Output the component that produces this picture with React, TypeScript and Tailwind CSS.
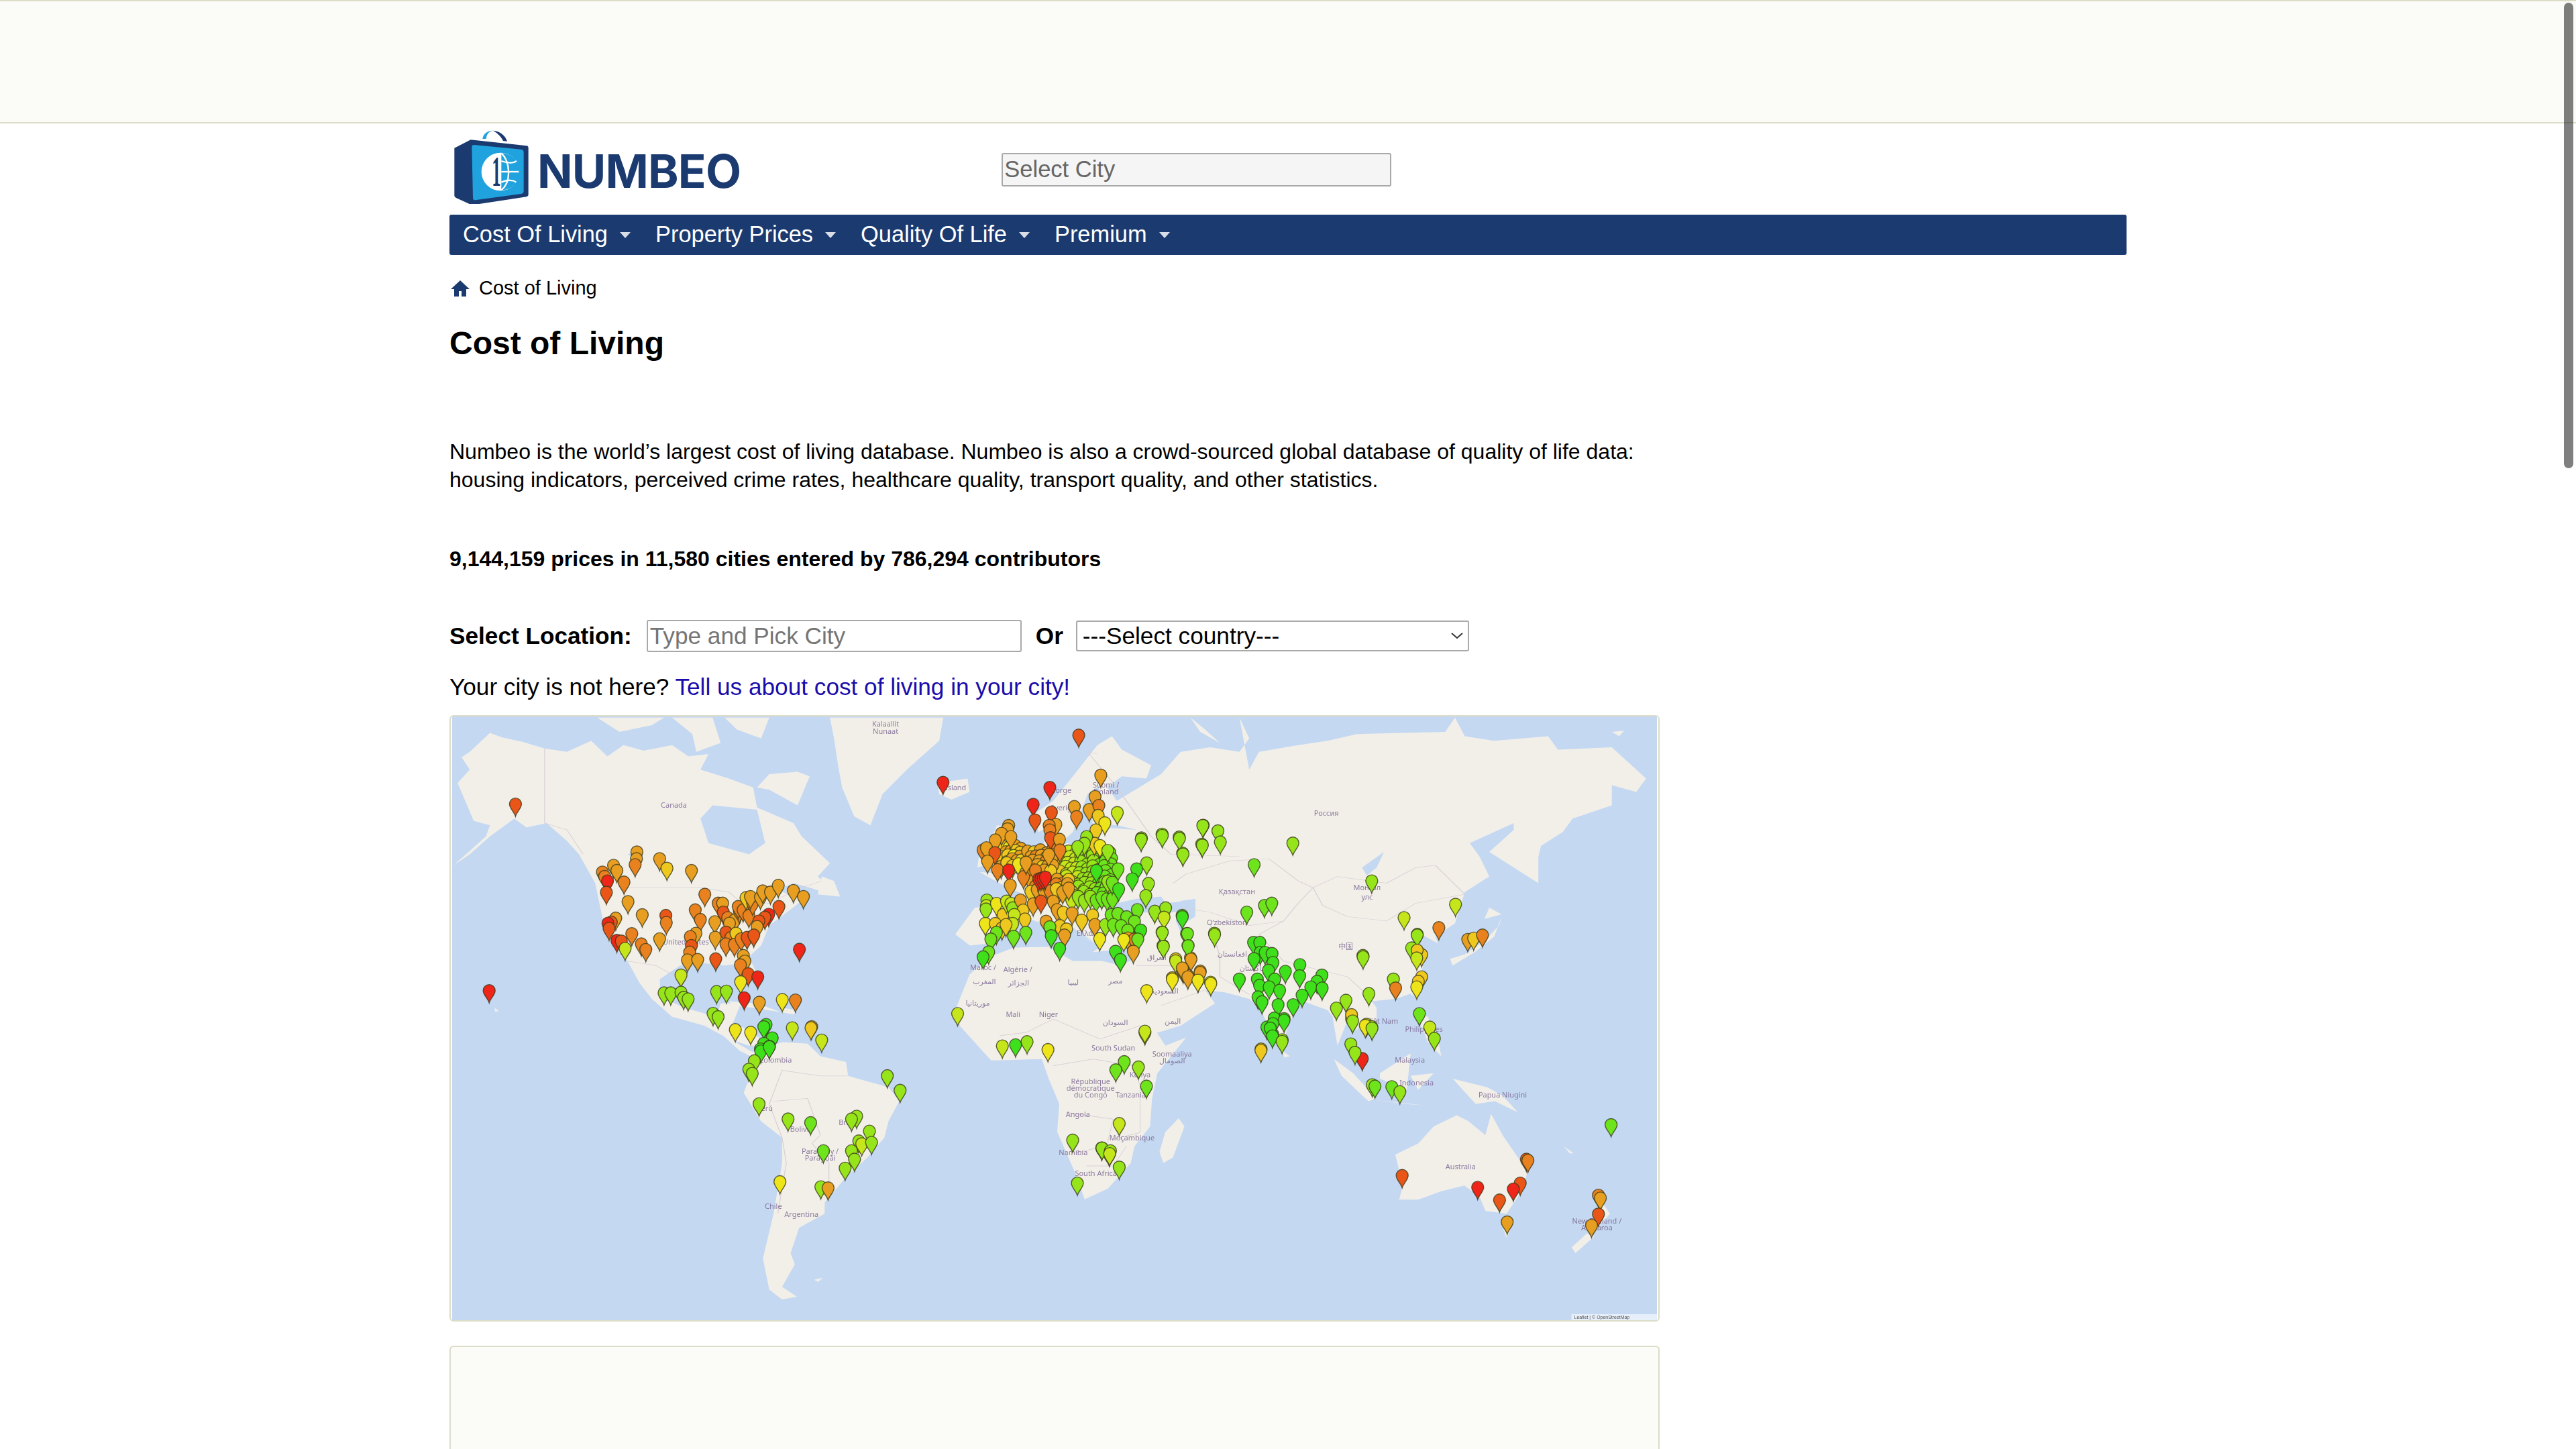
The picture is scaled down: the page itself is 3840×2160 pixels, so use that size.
const COLORS: Record<string, string> = {
  R: '#ee2518',
  r: '#ea5518',
  o: '#e8811e',
  a: '#e89e20',
  y: '#eec81e',
  Y: '#eee41a',
  l: '#c4e61a',
  L: '#96e41a',
  g: '#6de41c',
  G: '#3ee01c',
};

interface Pin {
  x: number;
  y: number;
  c: string;
}

// pins are written as "<colour><x>,<y>", tip position in a zoomed frame of the map
const parsePins = (s: string, ox: number, oy: number, sx: number, sy: number): Pin[] =>
  s
    .trim()
    .split(/\s+/)
    .map((p) => {
      const [x, y] = p.slice(1).split(',').map(Number);
      return { x: ox + x * sx, y: oy + y * sy, c: p[0] };
    });

// small fixed wobble so the dense clusters don't read as a grid
const wobble = (i: number, j: number) => Math.sin(i * 12.9 + j * 78.2) * 9;

const eastEurope = (): Pin[] => {
  const out: Pin[] = [];
  for (let j = 0; j < 10; j++) {
    for (let i = 0; i < 10; i++) {
      const x = 400 + i * 27 + (j % 2) * 13 + wobble(i, j);
      const y = 296 + j * 23 + wobble(j, i);
      if (x > 660 || (j > 7 && x < 450)) continue;
      const c = x < 440 ? 'y' : x < 500 ? 'l' : x < 580 ? 'L' : 'g';
      out.push({ x: 1440 + x / 3, y: 1190 + y / 3, c });
    }
  }
  return out;
};

const westEurope = (): Pin[] => {
  const out: Pin[] = [];
  const warm = ['y', 'a', 'y', 'Y', 'a'];
  for (let j = 0; j < 5; j++) {
    for (let i = 0; i < 4; i++) {
      out.push({
        x: 1440 + (165 + i * 24 + (j % 2) * 10 + wobble(i, j)) / 3,
        y: 1190 + (271 + j * 20 + wobble(j, i)) / 3,
        c: warm[(i * 3 + j) % 5],
      });
    }
  }
  const german = ['a', 'a', 'y', 'o', 'a'];
  for (let j = 0; j < 5; j++) {
    for (let i = 0; i < 5; i++) {
      out.push({
        x: 1440 + (275 + i * 26 + (j % 2) * 12 + wobble(i, j)) / 3,
        y: 1190 + (291 + j * 22 + wobble(j, i)) / 3,
        c: german[(i * 2 + j) % 5],
      });
    }
  }
  const alps = ['a', 'o', 'y', 'a'];
  for (let j = 0; j < 3; j++) {
    for (let i = 0; i < 7; i++) {
      out.push({
        x: 1440 + (295 + i * 26 + (j % 2) * 12 + wobble(i, j)) / 3,
        y: 1190 + (426 + j * 20 + wobble(j, i)) / 3,
        c: alps[(i + j) % 4],
      });
    }
  }
  return out;
};

const pins: Pin[] = [
  ...parsePins('r173,470 R108,1308', 660, 1060, 0.606, 1 / 3),
  ...parsePins(
    `a260,115 a258,145 o252,172 a362,145 y395,188 a505,198 o105,205 o115,225 a155,175 a170,198 R128,245 r123,296 o202,250
     a220,338 a284,397 r390,400 o392,432 a165,412 r145,430 R130,435 r135,458 o237,482 R170,512 r190,515 l207,548 o280,528 o300,553 a362,505
     o565,305 o522,375 o545,418 a525,480 o500,495 r505,535 o497,565 a487,600 a533,598 r614,595 a610,428 a612,498 o625,345 a645,345 r648,385
     o668,410 a700,420 a676,435 o720,380 o715,360 o737,375 o763,400 y750,320 o780,345 a770,315 a815,318 a825,290 a860,295 a895,265 a963,288 a1008,315
     r898,360 R852,395 r835,408 r808,425 a800,450 r660,475 o682,500 y705,480 o660,528 o698,530 o728,505 r755,498 r785,488 R990,552
     a738,580 a745,605 o725,622 r760,662 R803,676 Y726,698 R742,770 a810,790 Y913,778 o972,780
     l458,668 L382,748 L412,748 L458,745 L470,768 L490,775 L618,742 L662,740 L602,840 L625,855 Y702,913 Y771,925
     G840,890 G830,900 G868,950 G830,975 G855,988 G815,1000 l958,905 a1045,900 y1042,905 l1090,960`,
    860, 1250, 1 / 3, 1 / 3,
  ),
  ...parsePins(
    `G740,205 G760,190 L725,240 L712,270 L720,285 L1037,293 L1067,345 L736,393 L804,447 g857,460 L965,437 L953,447 L995,490
     L970,525 l977,535 L1000,530 L953,560 L960,590 g887,560 L938,622 Y785,670 L881,688 a898,692
     l1202,72 l1307,187 G1338,183 L1365,172 Y1414,200 L1472,522 L1540,550 L1558,572 L1483,675`,
    660, 1500, 0.638, 0.421,
  ),
  ...parsePins(
    `l187,140 g133,243 g111,272 L170,262 g191,330 l120,463 L75,550 L97,560 l95,570 L120,618 y490,198 L545,165 G520,145 G505,120 G525,95 G550,90
     g903,72 l930,120 L942,160 R754,232 L724,180 L735,210 L780,325 g787,330 g831,332 L852,350 l726,90 l765,110 L778,118
     r858,648 R1055,690 r1112,735 r1166,675 R1148,696 r1182,590 o1186,594 a1132,813 g1403,467 o1370,718 a1375,728 r1370,785 a1352,825`,
    1600, 1500, 0.574, 0.421,
  ),
  ...parsePins(
    `r352,160 a397,340 R75,372 R293,395 L606,565 L636,590 L480,622 L522,605 L557,618 L641,640 L603,650 L564,690 L789,645 g710,742
     L950,815 l1121,920 l1016,980 g1043,1055 o1087,1025 a1146,1078 y1158,1072 o1176,1058 L932,1150 g695,955 g731,925 g746,915 L629,1050 g572,1052 g575,1105 g563,970 L522,1045 L524,1105
     y550,1165 a580,1160 y543,1250 a565,1220 a575,1240 a600,1220 Y596,1258 l621,1270 l487,1490`,
    1350, 1060, 0.7336, 1 / 3,
  ),
  ...eastEurope(),
  ...westEurope(),
  ...parsePins(
    `R300,75 r308,145 r382,110 a402,165 o372,170 o375,190 r378,225 a418,232 a485,85 o495,130 a552,98 a578,40 o595,80 y592,125 Y622,158 l678,112
     y582,190 y575,250 L540,220 L530,250 Y600,260 L500,265 L635,282 L785,232 L880,215 L957,228 L1062,170 L1060,258 L973,298 L810,338 g681,365 G765,365 G745,410 L818,430 L806,485 G584,372
     a190,170 a185,185 a158,205 a130,235 a200,220 o75,280 a90,270 r128,292 a95,330 o140,368 R190,370 a197,438 o257,400 o310,370 a268,335 o420,280 a370,300
     R325,410 R335,408 R345,405 R355,402 L92,505 l90,530 L88,545 Y85,610 Y135,520 y165,570 l180,510 l200,520 L208,540 a243,505 y255,550 y263,590 l215,570 l208,610
     y130,610 y160,630 y178,615 g212,668 g267,650 g135,650 g110,680 g100,738 G75,760 a300,522 r335,510 a390,510 a408,548 y435,560 a475,563 y518,595 y567,572 a577,615 Y599,678
     a358,600 y420,620 y450,635 a441,662 g375,625 G381,665 G419,722 L635,420 g655,425 G684,455 L625,615 g650,570 g680,565 g720,580 g768,548 g660,615 g695,620 g755,600 g725,640 G783,640
     a725,675 o755,680 g770,680 Y707,682 a750,735 G670,735 G692,772 L846,555 L895,540 l888,582 G970,580 L880,650 g993,655 L885,713 g996,710 l940,778 a1009,770 a970,810 a995,850 Y925,860 a1050,830 Y1040,865 Y810,912`,
    1440, 1192, 1 / 3, 1 / 3,
  ),
  ...parsePins(
    `L35,90 G210,125 G238,125 G240,170 G262,170 G212,198 G293,175 G297,215 G277,250 G353,255 G418,225 G417,275 G146,290 Y18,310 G227,290 G237,318 G305,290 G280,325 G327,340
     G517,272 G495,300 G467,325 G518,330 G428,362 G388,405 G320,405 G230,370 G248,392 G303,465 G347,475 G297,490 G285,510 G295,545 L338,570 y243,610
     L702,190 L945,92 L920,150 y965,180 y945,160 l943,195 L728,355 L625,385 L582,420 y650,450 L655,478 Y712,498 L742,510 L838,290 o848,330 y965,280 y950,300 Y943,325`,
    1800, 1382, 1 / 3, 1 / 3,
  ),
];

const labels: [number, number, string][] = [
  [1002, 1204, 'Canada'],
  [1020, 1409, 'United States'],
  [1319, 1082, 'Kalaallit'],
  [1319, 1093, 'Nunaat'],
  [1424, 1177, 'Ísland'],
  [1581, 1182, 'Norge'],
  [1585, 1208, 'Sverige'],
  [1649, 1173, 'Suomi /'],
  [1649, 1184, 'Finland'],
  [1979, 1216, 'Россия'],
  [1845, 1333, 'Қазақстан'],
  [2040, 1327, 'Монгол'],
  [2040, 1341, 'улс'],
  [2008, 1416, '中国'],
  [1830, 1379, 'Oʻzbekiston'],
  [1620, 1395, 'Ελλάς'],
  [1838, 1427, 'افغانستان'],
  [1867, 1448, 'پاکستان'],
  [1725, 1432, 'العراق'],
  [1465, 1447, 'Maroc /'],
  [1467, 1468, 'المغرب'],
  [1517, 1450, 'Algérie /'],
  [1518, 1470, 'الجزائر'],
  [1600, 1469, 'ليبيا'],
  [1663, 1467, 'مصر'],
  [1737, 1482, 'السعودية'],
  [1457, 1500, 'موريتانيا'],
  [1510, 1517, 'Mali'],
  [1563, 1517, 'Niger'],
  [1663, 1529, 'السودان'],
  [1749, 1527, 'اليمن'],
  [1660, 1567, 'South Sudan'],
  [1748, 1576, 'Soomaaliya'],
  [1748, 1586, 'الصومال'],
  [1700, 1607, 'Kenya'],
  [1686, 1638, 'Tanzania'],
  [1626, 1617, 'République'],
  [1626, 1627, 'démocratique'],
  [1626, 1638, 'du Congo'],
  [1607, 1667, 'Angola'],
  [1600, 1724, 'Namibia'],
  [1634, 1755, 'South Africa'],
  [1688, 1702, 'Moçambique'],
  [1154, 1585, 'Colombia'],
  [1138, 1658, 'Perú'],
  [1193, 1689, 'Bolivia'],
  [1263, 1679, 'Brasil'],
  [1221, 1722, 'Paraguay /'],
  [1221, 1732, 'Paraguái'],
  [1151, 1804, 'Chile'],
  [1193, 1816, 'Argentina'],
  [2104, 1585, 'Malaysia'],
  [2114, 1619, 'Indonesia'],
  [2243, 1638, 'Papua Niugini'],
  [2180, 1745, 'Australia'],
  [2384, 1826, 'New Zealand /'],
  [2384, 1836, 'Aotearoa'],
  [2125, 1539, 'Philippines'],
  [2063, 1527, 'Việt Nam'],
];

function WorldMap() {
  const land = '#f2efe9';
  const water = '#c4d8f2';
  const line = '#d9cfd6';
  return (
    <svg viewBox="670 1067 1804 904" className="block w-full h-full blur-[0.6px]">
      <rect x="670" y="1067" width="1804" height="904" fill={water} />

      {/* americas, traced from the top-left part of the map */}
      <g transform="translate(660 1060) scale(0.606 0.3333)" fill={land}>
        <polygon points="40,205 60,180 110,95 140,115 190,135 245,165 300,180 360,130 400,200 440,150 490,175 560,150 600,200 650,190 630,260 700,300 760,340 770,430 860,500 880,560 950,680 920,740 970,830 900,790 860,770 820,800 900,860 880,850 830,920 800,960 780,1050 750,1100 770,1180 760,1200 735,1130 690,1140 640,1130 580,1140 530,1200 530,1280 590,1330 630,1350 670,1370 680,1310 730,1310 710,1400 750,1430 800,1500 750,1500 700,1470 640,1410 560,1370 510,1290 480,1220 450,1120 400,1020 385,900 370,770 330,640 300,580 250,500 200,520 170,480 110,560 60,640 20,690 100,560 110,510 70,490 30,320 60,260" />
        <polygon points="375,26 430,90 510,60 540,26" />
        <polygon points="560,26 610,100 620,180 680,140 660,26" />
        <polygon points="690,26 800,26 780,120 720,80" />
        <polygon points="770,340 800,280 870,270 900,290 870,420 800,350" />
        <polygon points="950,26 1230,26 1220,130 1140,260 1080,370 1050,510 1010,470 980,340 970,240 960,120" />
        <polygon points="1215,320 1290,300 1295,360 1250,395 1220,370" />
        <polygon points="700,1300 770,1310 830,1350 760,1330 710,1320" />
        <polygon points="830,1330 870,1340 860,1360 830,1350" />
        <polygon points="930,740 960,760 975,830 920,820" />
        <polygon points="122,1330 132,1345 122,1347" />
        <polygon fill={water} points="630,480 660,420 770,440 790,590 750,640 650,590" />
        <polygon fill={water} points="450,640 480,620 470,660" />
        <g fill="none" stroke={line} strokeWidth="2">
          <polyline points="455,790 630,790 700,810 740,870 800,860 880,790 930,760" />
          <polyline points="245,165 245,500 300,530 340,640" />
          <polyline points="450,1120 520,1140 560,1180 590,1170" />
        </g>
      </g>
      <g transform="translate(660 1500) scale(0.638 0.421)" fill={land}>
        <polygon points="720,165 790,130 850,135 880,180 940,200 945,250 1040,290 1065,340 1040,410 1030,470 990,540 940,610 890,700 890,740 830,790 810,880 820,920 790,1000 825,1035 790,1045 760,1010 745,900 770,740 790,560 790,470 740,410 700,310 715,250 700,220 730,190" />
        <polygon points="510,0 570,30 620,60 670,120 720,165 730,190 690,160 640,90 570,40 520,10" />
        <polygon points="865,975 885,968 875,982" />
        <g fill="none" stroke={line} strokeWidth="2">
          <polyline points="790,230 760,350 790,470 800,560 780,740" />
          <polyline points="790,230 880,250 945,250" />
          <polyline points="770,340 850,330 880,460 860,490 900,560 900,640" />
        </g>
      </g>

      {/* eurasia */}
      <g transform="translate(1350 1060) scale(0.7336 0.3333)" fill={land}>
        <polygon points="260,460 300,400 340,290 390,150 420,110 440,170 500,240 490,300 440,290 410,340 430,400 520,280 560,180 620,160 680,180 700,120 680,26 700,260 720,180 800,150 860,130 920,100 1100,90 1120,26 1140,110 1200,130 1310,110 1330,170 1440,160 1510,300 1490,360 1440,330 1440,420 1360,480 1340,540 1290,610 1290,770 1190,630 1240,530 1240,500 1150,590 1170,650 1190,740 1140,810 1120,950 1080,1010 1085,1040 1060,1010 1040,990 1030,1050 1060,1100 1050,1180 1050,1250 1000,1290 950,1300 960,1330 960,1410 930,1390 920,1430 900,1390 880,1500 870,1370 860,1340 810,1300 780,1400 770,1500 760,1490 720,1330 700,1290 650,1260 610,1250 630,1310 560,1410 500,1450 470,1340 450,1210 430,1140 470,1110 470,1060 380,1080 400,1050 360,1010 395,1050 340,970 330,950 290,960 250,930 200,960 200,1000 170,1040 130,1050 100,1000 140,880 180,870 220,850 240,820 190,770 150,720 220,730 260,670 280,600 290,520 270,540" />
        <polygon points="185,510 220,520 220,640 240,680 170,700 190,640 170,590" />
        <polygon points="150,620 170,620 175,680 145,700" />
        <polygon points="580,26 610,80 640,140 600,90" />
        <polygon points="1440,90 1465,85 1455,110" />
        <polygon points="1210,960 1180,1030 1140,1090 1110,1110 1115,1140 1160,1080 1200,1010 1215,920" />
        <polygon points="1190,880 1215,910 1180,930" />
        <polygon points="1040,1240 1050,1250 1040,1280 1030,1270" />
        <polygon points="1275,640 1300,560 1285,700" />
        <polygon fill={water} points="370,370 395,330 380,430 380,500 430,510 470,530 400,520 390,620 350,610 330,590 310,600 340,540 360,430" />
        <polygon fill={water} points="430,860 470,840 520,830 530,860 570,850 560,900 500,900 430,910 410,880" />
        <polygon fill={water} points="560,850 590,840 590,920 560,960 580,1000 560,990 550,940" />
        <polygon fill={water} points="555,1150 590,1190 625,1225 600,1225 570,1190" />
        <polygon fill={water} points="930,700 975,630 960,700 940,735" />
        <g fill="none" stroke={line} strokeWidth="2">
          <polyline points="545,770 570,730 660,670 740,660 800,760 830,790 800,860 770,940 700,960 620,900 560,880" />
          <polyline points="830,790 880,740 980,770 1040,700 1080,690 1140,820 1040,860 980,940 900,920 850,870 830,790" />
          <polyline points="770,940 720,1000 770,1120 900,1190 950,1290" />
          <polyline points="620,950 640,1100 640,1190 700,1270" />
          <polyline points="390,190 370,180 430,340 500,560 540,640 680,650" />
          <polyline points="220,1060 250,1200 290,1260 390,1320" />
          <polyline points="290,1055 290,1250" />
          <polyline points="395,1120 395,1300 470,1300" />
          <polyline points="470,1140 540,1140 560,1190" />
          <polyline points="520,1320 610,1250" />
        </g>
      </g>

      {/* africa, written straight in page pixels */}
      <polygon
        fill={land}
        points="1445,1453 1475,1427 1511,1413 1563,1412 1599,1433 1643,1433 1680,1442 1706,1490 1725,1540 1738,1560 1769,1548 1726,1601 1718,1639 1715,1681 1692,1710 1686,1736 1652,1774 1617,1790 1604,1753 1576,1689 1579,1647 1563,1609 1553,1580 1477,1582 1430,1530 1426,1500"
      />
      <g fill="none" stroke={line} strokeWidth="1">
        <polyline points="1490,1545 1530,1540 1570,1520 1640,1550 1700,1530" />
        <polyline points="1570,1590 1630,1580 1690,1590 1700,1620 1700,1690 1660,1700" />
        <polyline points="1590,1660 1660,1670 1650,1710 1605,1720" />
        <polyline points="1620,1740 1660,1740 1680,1710" />
      </g>

      {/* south east and pacific */}
      <g transform="translate(1600 1500) scale(0.574 0.421)" fill={land}>
        <polygon points="275,400 290,430 260,540 235,560 225,520 240,450" />
        <polygon points="800,240 880,170 870,300 800,260" />
        <polygon points="680,190 730,240 790,330 770,340 700,250" />
        <polygon points="780,335 920,355 870,350" />
        <polygon points="880,250 940,240 900,300" />
        <polygon points="990,260 1080,290 1120,320 1160,380 1100,340 1050,350 1010,290" />
        <polygon points="840,530 900,490 940,430 1000,390 1030,410 1075,460 1090,385 1120,460 1185,590 1170,660 1130,740 1075,730 1060,680 1020,640 960,660 900,690 850,690 860,640" />
        <polygon points="1115,770 1150,770 1130,825" />
        <polygon points="1370,680 1400,740 1360,800" />
        <polygon points="1340,810 1360,820 1310,880 1300,860" />
        <polygon points="1280,500 1305,525 1295,525" />
        <polygon points="545,160 565,180 550,185" />
        <polygon points="890,10 925,40 950,110 960,180 925,130" />
      </g>

      {labels.map(([x, y, t]) => (
        <text
          key={t + x}
          x={x}
          y={y}
          textAnchor="middle"
          fontSize="11"
          fill="#7a6690"
          fillOpacity="0.85"
          fontFamily="'Noto Sans', 'DejaVu Sans', 'Noto Sans CJK SC', sans-serif"
        >
          {t}
        </text>
      ))}

      {pins.map((p, i) => (
        <path
          key={i}
          transform={`translate(${p.x} ${p.y})`}
          d="M0 0C-2 -7 -9 -12 -9 -18.5A9 9 0 1 1 9 -18.5C9 -12 2 -7 0 0Z"
          fill={COLORS[p.c]}
          stroke="#3a3a1a"
          strokeOpacity="0.8"
          strokeWidth="1.4"
        />
      ))}

      <rect x="2346" y="1962" width="128" height="9" fill="#fff" fillOpacity="0.6" />
      <text x="2350" y="1969" fontSize="7" fill="#555" fontFamily="'Liberation Sans', sans-serif">
        Leaflet | © OpenStreetMap
      </text>
    </svg>
  );
}

function Logo() {
  return (
    <svg viewBox="30 12 360 360" className="w-[120px] h-[120px] shrink-0">
      <path d="M178 82C180 58 200 44 225 44C205 48 195 62 195 80Z" fill="#1fa2dd" />
      <path d="M225 44C255 46 280 65 288 92L270 90C262 72 245 55 225 44Z" fill="#1b3a70" />
      <path
        d="M52 122L125 85L375 112Q383 113 383 122V330Q383 338 375 340L130 377L60 345Q52 341 52 335Z"
        fill="#1b3a70"
      />
      <path d="M130 118Q130 107 141 108L350 128Q362 130 362 140V315Q362 325 350 327L146 355Q135 356 135 345Z" fill="#1fa2dd" />
      <circle cx="258" cy="228" r="85" fill="#fff" />
      <path d="M262 145A83 83 0 0 1 262 311Z" fill="#1fa2dd" />
      <g fill="none" stroke="#fff" strokeWidth="7">
        <path d="M262 145C300 180 310 270 262 311" />
        <path d="M262 228H340" />
        <path d="M262 180C290 190 315 190 330 180" />
        <path d="M262 275C290 262 315 265 328 275" />
      </g>
      <text
        x="220"
        y="292"
        fontSize="188"
        fontWeight="700"
        fill="#1b3a70"
        textLength="40"
        lengthAdjust="spacingAndGlyphs"
        fontFamily="'Liberation Serif', serif"
      >
        1
      </text>
    </svg>
  );
}

const navItems = ['Cost Of Living', 'Property Prices', 'Quality Of Life', 'Premium'];

export default function App() {
  return (
    <div className="relative h-[2160px] overflow-hidden bg-white font-['Liberation_Sans',Arial,sans-serif] text-black">
      <div className="h-[184px] border-y-2 border-[#dcdcc8] bg-[#fbfcf8]" />

      <div className="ml-[670px] w-[2500px]">
        <div className="flex h-[136px] items-start">
          <Logo />
          <span className="mt-[29px] ml-[11px] font-['Inter',sans-serif] text-[69px] leading-[84px] font-bold tracking-[-0.8px] text-[#1b3a70]">
            NUMBEO
          </span>
          <input
            placeholder="Select City"
            className="mt-[44px] ml-[389px] h-[50px] w-[581px] rounded-[3px] border-2 border-[#a9a9a9] bg-[#f5f5f5] px-[2px] text-[34.5px] outline-none placeholder:text-[#666]"
          />
        </div>

        <nav className="flex h-[60px] items-center gap-[37px] rounded-[3px] bg-[#1b3a70] pl-[20px] text-[34.4px] text-white">
          {navItems.map((item) => (
            <div key={item} className="flex items-center gap-[18px]">
              <span>{item}</span>
              <svg width="16" height="9" viewBox="0 0 16 9" className="mt-[2px]">
                <polygon points="0,0 16,0 8,9" fill="#d8dde6" />
              </svg>
            </div>
          ))}
        </nav>

        <div className="mt-[37px] flex h-[26px] items-center gap-[14px] text-[29px]">
          <svg width="28" height="24" viewBox="0 0 28 24" className="ml-[2px]">
            <path d="M14 0L28 13H23V24H16V16H12V24H5V13H0Z" fill="#1b3a70" />
          </svg>
          <span>Cost of Living</span>
        </div>

        <h1 className="mt-[39px] text-[48px] leading-[60px] font-bold">Cost of Living</h1>

        <p className="mt-[111px] w-[1804px] text-[32px] leading-[41.5px]">
          Numbeo is the world’s largest cost of living database. Numbeo is also a crowd-sourced global database of
          quality of life data: housing indicators, perceived crime rates, healthcare quality, transport quality, and
          other statistics.
        </p>

        <p className="mt-[77px] text-[32px] leading-[41px] font-bold">
          9,144,159 prices in 11,580 cities entered by 786,294 contributors
        </p>

        <div className="mt-[70px] flex h-[48px] items-center text-[35.2px]">
          <b>Select Location:</b>
          <input
            placeholder="Type and Pick City"
            className="ml-[22px] h-[48px] w-[559px] rounded-[3px] border-2 border-[#a9a9a9] bg-white px-[3px] outline-none placeholder:text-[#757575]"
          />
          <b className="ml-[21px]">Or</b>
          <div className="relative ml-[19px]">
            <select className="block h-[46px] w-[586px] appearance-none rounded-[3px] border-2 border-[#a9a9a9] bg-white px-[8px] leading-[40px] outline-none">
              <option>---Select country---</option>
            </select>
            <svg
              width="18"
              height="10"
              viewBox="0 0 18 10"
              className="pointer-events-none absolute top-[18px] right-[9px]"
            >
              <polyline points="1,1 9,8 17,1" fill="none" stroke="#333" strokeWidth="2" />
            </svg>
          </div>
        </div>

        <p className="mt-[29px] text-[35.2px] leading-[46px]">
          Your city is not here? <a className="text-[#1a0dab]">Tell us about cost of living in your city!</a>
        </p>

        <div className="mt-[19px] h-[904px] w-[1804px] overflow-hidden rounded-[6px] border-2 border-[#dcdcc8]">
          <WorldMap />
        </div>

        <div className="mt-[36px] h-[300px] w-[1804px] rounded-[6px] border-2 border-[#dcdcc8] bg-[#fbfcf8]" />
      </div>

      <div className="absolute top-[4px] right-[4px] h-[694px] w-[14px] rounded-full bg-black/50" />
    </div>
  );
}
